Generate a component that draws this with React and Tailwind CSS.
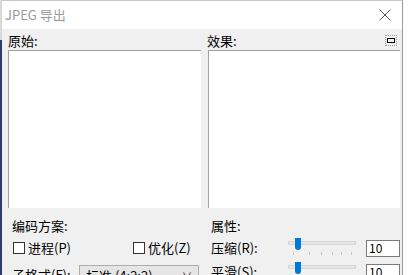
import React from "react";

const font = { fontFamily: '"Noto Sans CJK SC", "Noto Sans", sans-serif' };

function Slider() {
  return (
    <div className="relative w-[70px] h-[20px] shrink-0">
      <div className="absolute left-[2px] right-0 top-[3px] h-[4px] bg-[#e7e7e7] border border-[#d6d6d6]" />
      <div className="absolute left-[9px] top-0 w-[6px] h-[12px] bg-[#0078d7] rounded-b-[3px]" />
      <div className="absolute left-[7px] top-[14px] w-[1px] h-[3px] bg-[#c8c8c8]" />
      <div className="absolute left-[23px] top-[14px] w-[1px] h-[3px] bg-[#c8c8c8]" />
      <div className="absolute left-[35px] top-[14px] w-[1px] h-[3px] bg-[#c8c8c8]" />
      <div className="absolute left-[46px] top-[14px] w-[1px] h-[3px] bg-[#c8c8c8]" />
      <div className="absolute left-[55px] top-[14px] w-[1px] h-[3px] bg-[#c8c8c8]" />
      <div className="absolute left-[65px] top-[14px] w-[1px] h-[3px] bg-[#c8c8c8]" />
    </div>
  );
}

function Checkbox({ label }) {
  return (
    <div className="flex items-center gap-[3px]">
      <div className="w-[12px] h-[12px] border border-[#333] bg-white" />
      <span>{label}</span>
    </div>
  );
}

export default function App() {
  return (
    <div className="w-[408px] h-[275px] bg-white flex overflow-hidden text-[12px] text-black" style={font}>
      <div className="w-[2px] flex flex-col shrink-0">
        <div className="h-[40px] bg-[#d8d8d8] shrink-0" />
        <div className="flex-1 bg-[#2e3d6b]" />
      </div>
      <div className="w-[401px] shrink-0 flex flex-col border-r border-[#9a9a9a] border-t border-t-[#c8c8c8]">
        <div className="h-[28px] shrink-0 bg-white flex items-center justify-between pl-[3px] pr-[10px]">
          <span className="text-[13px] text-[#9a9a9a]">JPEG 导出</span>
          <svg width="12" height="12" viewBox="0 0 12 12" className="mr-[1px]">
            <path d="M0.5 0.5 L11.5 11.5 M11.5 0.5 L0.5 11.5" stroke="#555" strokeWidth="1" />
          </svg>
        </div>
        <div className="flex-1 bg-[#f0f0f0] flex flex-col pl-[6px] pr-[2px]">
          <div className="h-[21px] shrink-0 flex items-center">
            <div className="w-[199px] text-[13px] pt-[3px]">原始:</div>
            <div className="flex-1 text-[13px] pt-[3px]">效果:</div>
            <div className="w-[12px] h-[11px] mr-[3px] mt-[2px] border border-dotted border-[#999] flex items-center justify-center">
              <div className="w-[8px] h-[5px] border-[1.5px] border-black" />
            </div>
          </div>
          <div className="flex gap-[7px] h-[158px] shrink-0">
            <div className="w-[193px] bg-white border-t border-l border-[#a0a0a0]" />
            <div className="w-[193px] bg-white border-t border-l border-[#a0a0a0]" />
          </div>
          <div className="flex pt-[7px] shrink-0">
            <div className="w-[200px] pl-[4px] flex flex-col">
              <div className="h-[21px] flex items-center text-[13px]">编码方案:</div>
              <div className="h-[24px] flex items-center text-[13px] pl-[1px]">
                <div className="w-[120px]">
                  <Checkbox label="进程(P)" />
                </div>
                <Checkbox label="优化(Z)" />
              </div>
              <div className="h-[24px] flex items-start text-[13px]">
                <span className="w-[67px] pt-[5px]">子格式(F):</span>
                <div className="mt-[5px] w-[120px] h-[21px] border border-[#adadad] bg-[#e5e5e5] flex items-center justify-between px-[6px]">
                  <span>标准 (4:2:2)</span>
                  <span className="text-[10px]">∨</span>
                </div>
              </div>
            </div>
            <div className="flex-1 pl-[4px] flex flex-col">
              <div className="h-[21px] flex items-center text-[13px]">属性:</div>
              <div className="h-[24px] flex items-center text-[13px]">
                <span className="w-[75px] shrink-0">压缩(R):</span>
                <Slider />
                <div className="ml-[10px] w-[34px] h-[17px] shrink-0 bg-white border border-[#7a7a7a] flex items-center pl-[2px] text-[12px]">10</div>
              </div>
              <div className="h-[24px] flex items-center text-[13px]">
                <span className="w-[75px] shrink-0">平滑(S):</span>
                <Slider />
                <div className="ml-[10px] w-[34px] h-[17px] shrink-0 bg-white border border-[#7a7a7a] flex items-center pl-[2px] text-[12px]">10</div>
              </div>
            </div>
          </div>
        </div>
      </div>
      <div className="flex-1 bg-white" />
    </div>
  );
}
